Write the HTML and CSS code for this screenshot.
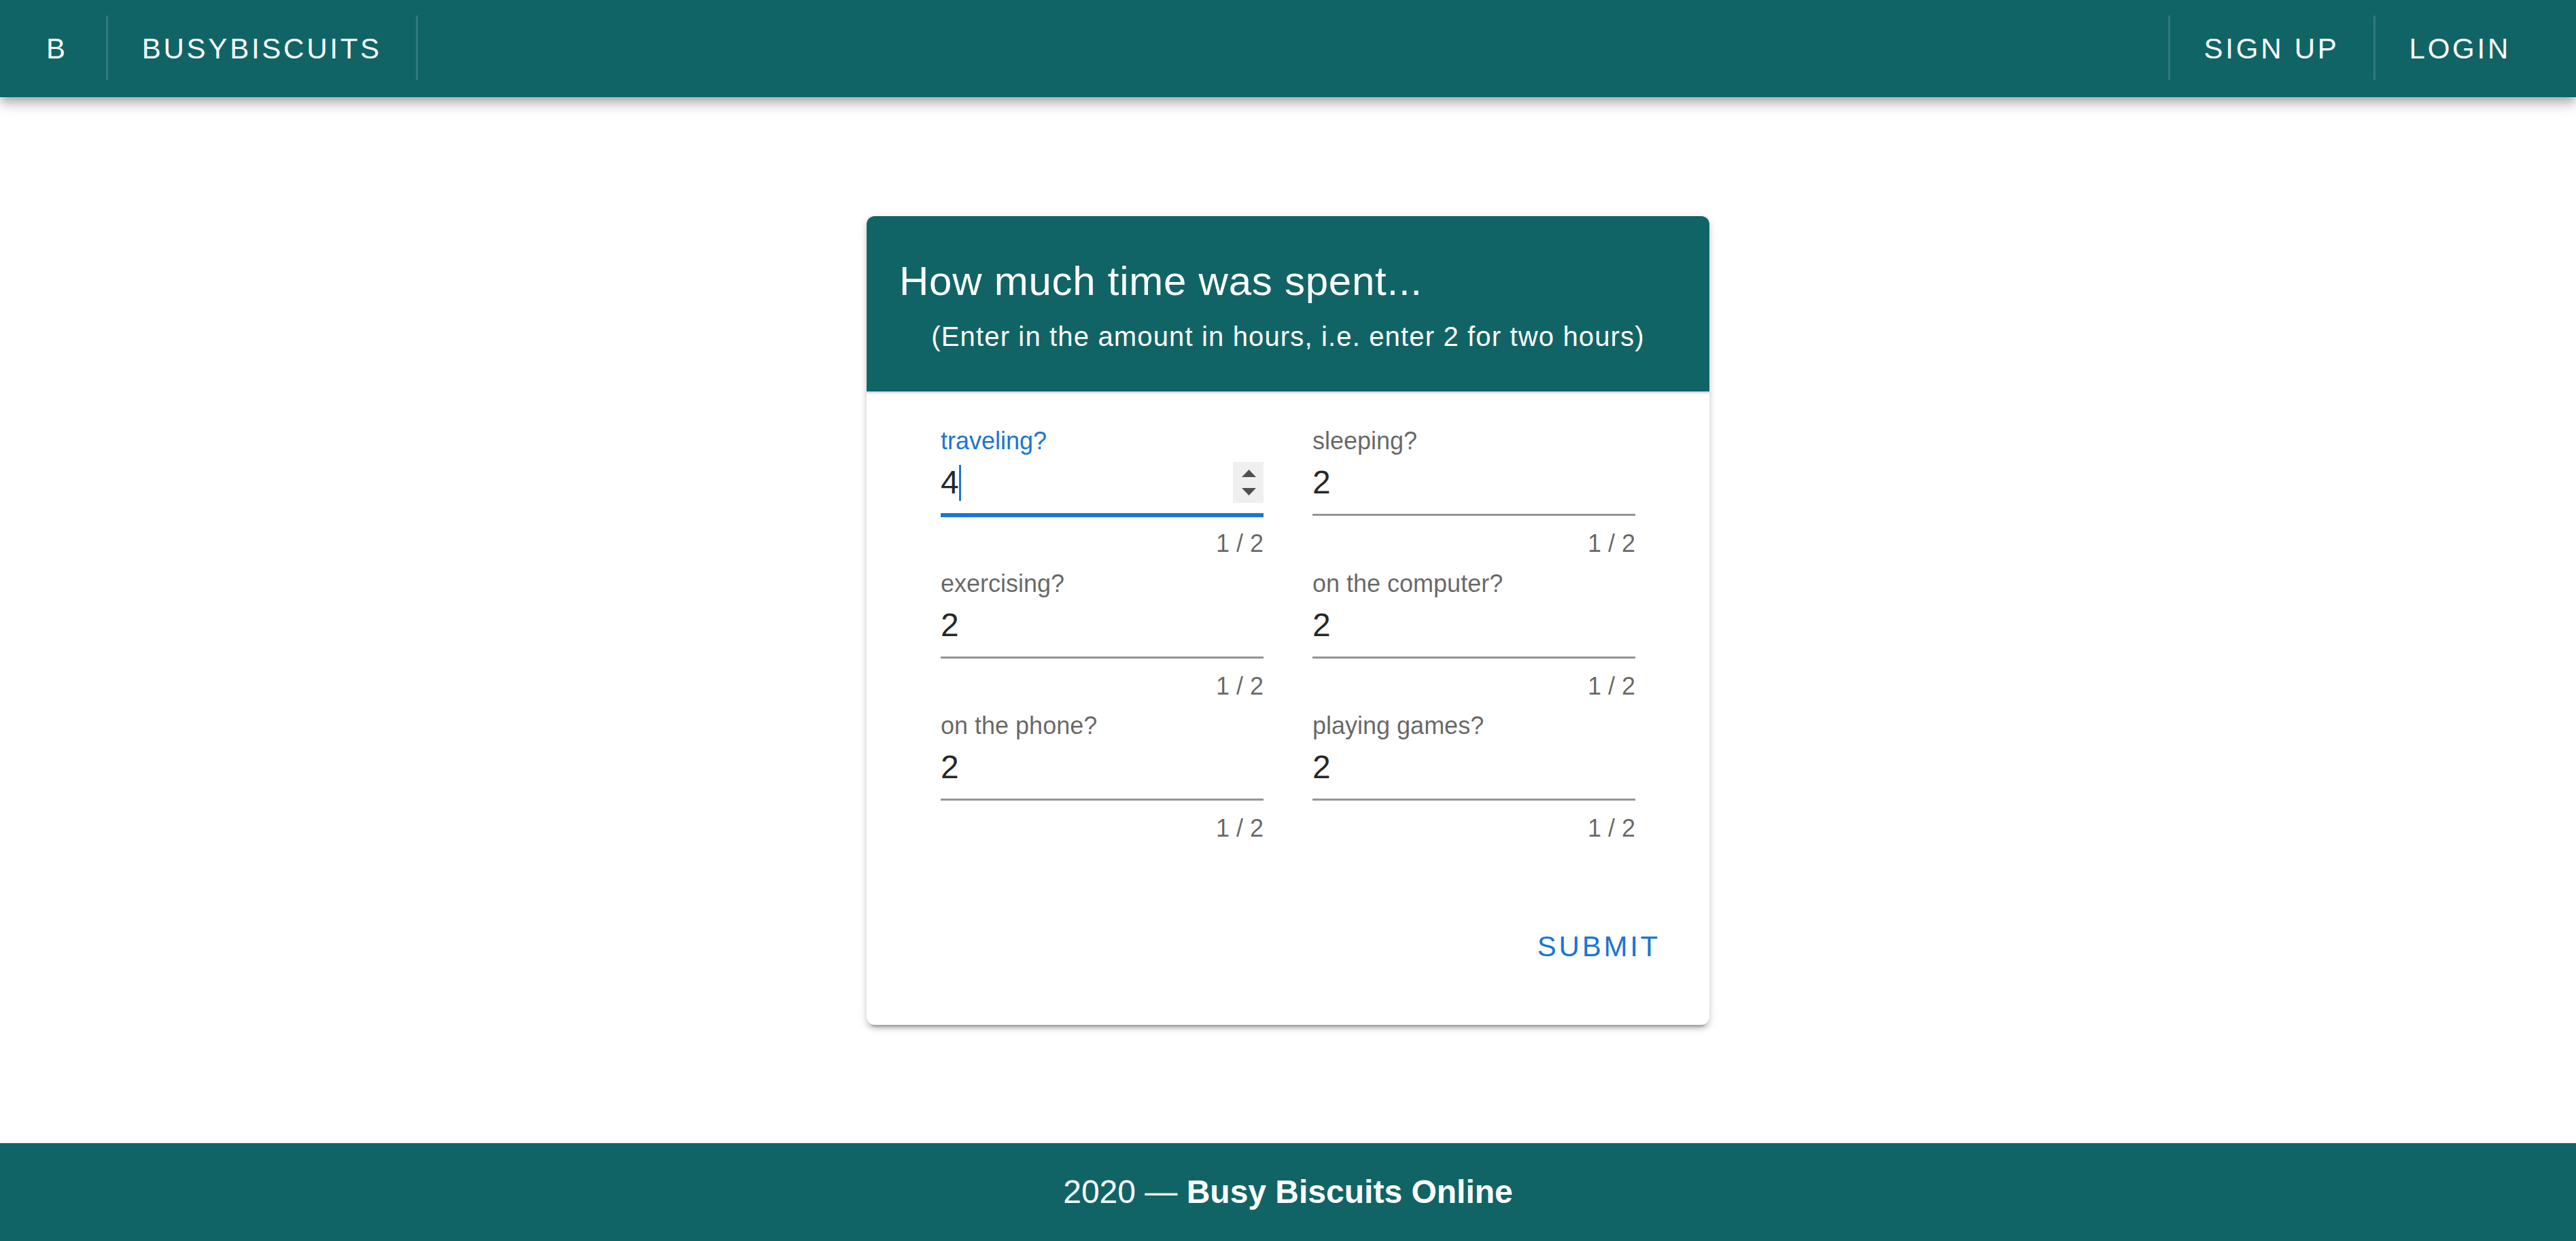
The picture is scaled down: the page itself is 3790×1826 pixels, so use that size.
FILE: index.html
```html
<!DOCTYPE html>
<html lang="en">
<head>
<meta charset="utf-8">
<title>BusyBiscuits</title>
<link rel="stylesheet" href="styles.css">
</head>
<body>
<div class="app">
  <header class="app-bar">
    <a class="bar-btn bar-btn--brand" href="#">B</a>
    <span class="bar-divider"></span>
    <a class="bar-btn" href="#">BusyBiscuits</a>
    <span class="bar-divider"></span>
    <span class="spacer"></span>
    <span class="bar-divider"></span>
    <a class="bar-btn" href="#">Sign Up</a>
    <span class="bar-divider"></span>
    <a class="bar-btn" href="#">Login</a>
  </header>

  <main class="main">
    <section class="card">
      <div class="card-header">
        <h1 class="card-title">How much time was spent...</h1>
        <p class="card-subtitle">(Enter in the amount in hours, i.e. enter 2 for two hours)</p>
      </div>
      <div class="card-divider"></div>
      <form class="card-body">
        <div class="fields">
          <div class="field field--focused">
            <div class="field-label">traveling?</div>
            <div class="field-control">
              <span class="field-value">4<span class="caret"></span></span>
              <span class="spinner">
                <svg viewBox="0 0 45 60" width="45" height="60" aria-hidden="true">
                  <polygon points="13,22 34,22 23.5,11" fill="#505050"/>
                  <polygon points="13,38 34,38 23.5,49" fill="#505050"/>
                </svg>
              </span>
            </div>
            <div class="field-line"></div>
            <div class="field-counter">1 / 2</div>
          </div>
          <div class="field">
            <div class="field-label">sleeping?</div>
            <div class="field-control"><span class="field-value">2</span></div>
            <div class="field-line"></div>
            <div class="field-counter">1 / 2</div>
          </div>
          <div class="field">
            <div class="field-label">exercising?</div>
            <div class="field-control"><span class="field-value">2</span></div>
            <div class="field-line"></div>
            <div class="field-counter">1 / 2</div>
          </div>
          <div class="field">
            <div class="field-label">on the computer?</div>
            <div class="field-control"><span class="field-value">2</span></div>
            <div class="field-line"></div>
            <div class="field-counter">1 / 2</div>
          </div>
          <div class="field">
            <div class="field-label">on the phone?</div>
            <div class="field-control"><span class="field-value">2</span></div>
            <div class="field-line"></div>
            <div class="field-counter">1 / 2</div>
          </div>
          <div class="field">
            <div class="field-label">playing games?</div>
            <div class="field-control"><span class="field-value">2</span></div>
            <div class="field-line"></div>
            <div class="field-counter">1 / 2</div>
          </div>
        </div>
        <div class="card-actions">
          <button class="submit" type="button">Submit</button>
        </div>
      </form>
    </section>
  </main>

  <footer class="footer">2020 — <strong>Busy Biscuits Online</strong></footer>
</div>
</body>
</html>
```

FILE: styles.css
```css
* { box-sizing: border-box; }

html, body {
  margin: 0;
  padding: 0;
}

body {
  font-family: "Liberation Sans", Arial, sans-serif;
  background: #ffffff;
  color: rgba(0, 0, 0, 0.87);
}

.app {
  display: flex;
  flex-direction: column;
  height: 100vh;
}

/* ---------- App bar ---------- */
.app-bar {
  position: relative;
  z-index: 2;
  flex: 0 0 143px;
  height: 143px;
  display: flex;
  align-items: stretch;
  padding: 0 48px 0 20px;
  background: #116466;
  box-shadow: 0 6px 12px -3px rgba(0, 0, 0, 0.2),
              0 12px 15px 0 rgba(0, 0, 0, 0.14),
              0 3px 30px 0 rgba(0, 0, 0, 0.12);
}

.bar-btn {
  display: flex;
  align-items: center;
  padding: 0 48px;
  color: #ffffff;
  font-size: 42px;
  letter-spacing: 3.75px;
  text-transform: uppercase;
  text-decoration: none;
  white-space: nowrap;
}

.bar-btn--brand {
  padding-right: 54px;
}

.bar-divider {
  width: 3px;
  margin: 23px 2px 25px;
  background: rgba(255, 255, 255, 0.14);
}

.spacer {
  flex: 1;
}

/* ---------- Main ---------- */
.main {
  flex: 1;
  display: flex;
  align-items: center;
  justify-content: center;
}

.card {
  width: 1240px;
  background: #ffffff;
  border-radius: 12px;
  box-shadow: 0 9px 3px -6px rgba(0, 0, 0, 0.2),
              0 6px 6px 0 rgba(0, 0, 0, 0.14),
              0 3px 15px 0 rgba(0, 0, 0, 0.12);
}

.card-header {
  background: #116466;
  color: #ffffff;
  border-radius: 12px 12px 0 0;
  padding: 48px 48px 48px;
}

.card-title {
  margin: 0;
  font-size: 60px;
  line-height: 96px;
  font-weight: 400;
  letter-spacing: 0.75px;
}

.card-subtitle {
  margin: 0;
  font-size: 40px;
  line-height: 66px;
  letter-spacing: 1.15px;
  text-align: center;
}

.card-divider {
  height: 3px;
  background: rgba(0, 0, 0, 0.12);
}

.card-body {
  padding-top: 49.5px;
}

.fields {
  display: grid;
  grid-template-columns: 475px 475px;
  column-gap: 72px;
  row-gap: 16.5px;
  justify-content: center;
}

.field-label {
  height: 42px;
  font-size: 36px;
  line-height: 42px;
  color: rgba(0, 0, 0, 0.6);
  white-space: nowrap;
}

.field--focused .field-label {
  color: #1976d2;
}

.field-control {
  display: flex;
  align-items: stretch;
  height: 60px;
  margin-top: 10px;
}

.field-value {
  flex: 1;
  display: flex;
  align-items: center;
  font-size: 48px;
  line-height: 60px;
  color: rgba(0, 0, 0, 0.87);
}

.caret {
  width: 3px;
  height: 53px;
  background: #1976d2;
}

.spinner {
  width: 45px;
  height: 60px;
  background: #efefef;
  display: flex;
}

.field-line {
  position: relative;
  height: 3px;
  margin-top: 16px;
  background: rgba(0, 0, 0, 0.42);
}

.field--focused .field-line::after {
  content: "";
  position: absolute;
  left: 0;
  right: 0;
  top: -1.5px;
  height: 6px;
  background: #1976d2;
}

.field-counter {
  margin-top: 20px;
  font-size: 36px;
  line-height: 42px;
  text-align: right;
  color: rgba(0, 0, 0, 0.6);
}

.card-actions {
  display: flex;
  justify-content: flex-end;
  padding: 99px 24px 60.5px;
}

.submit {
  height: 108px;
  padding: 0 48px;
  border: 0;
  background: none;
  color: #1976d2;
  font-family: "Liberation Sans", Arial, sans-serif;
  font-size: 42px;
  letter-spacing: 3.75px;
  text-transform: uppercase;
  cursor: pointer;
}

/* ---------- Footer ---------- */
.footer {
  flex: 0 0 144px;
  height: 144px;
  background: #116466;
  color: #ffffff;
  font-size: 48px;
  line-height: 144px;
  text-align: center;
}
```
